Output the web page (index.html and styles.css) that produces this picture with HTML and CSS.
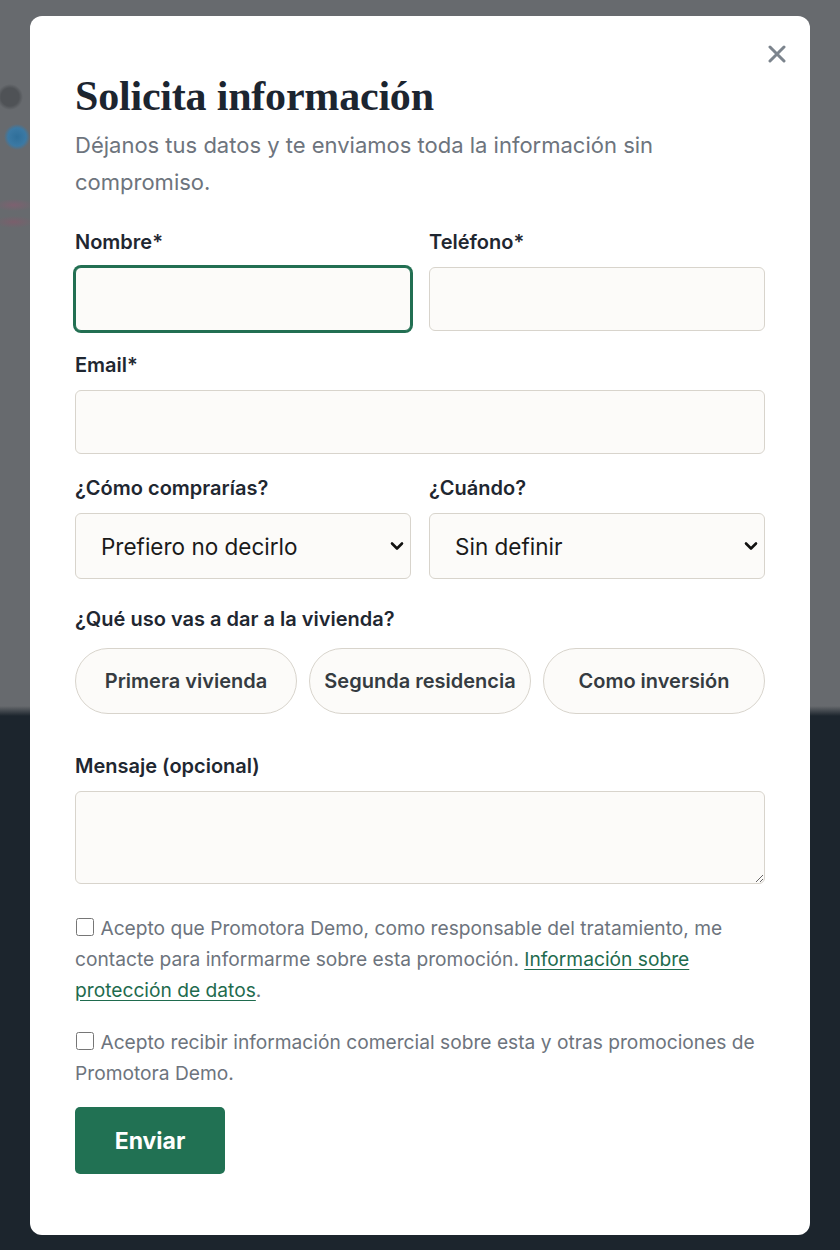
FILE: index.html
```html
<!DOCTYPE html>
<html lang="es">
<head>
<meta charset="utf-8">
<title>Solicita información</title>
<link rel="stylesheet" href="styles.css">
</head>
<body>
<div class="backdrop">
  <div class="modal">
    <div class="modal-top">
      <button class="close" type="button" aria-label="Cerrar">
        <svg width="18" height="18" viewBox="0 0 18 18"><path d="M2 2 L16 16 M16 2 L2 16" stroke="#7c848d" stroke-width="3" stroke-linecap="round"/></svg>
      </button>
    </div>
    <h1 class="title">Solicita información</h1>
    <p class="subtitle">Déjanos tus datos y te enviamos toda la información sin compromiso.</p>

    <form class="form">
      <div class="row two">
        <div class="field">
          <label class="label">Nombre*</label>
          <input class="input focused" type="text">
        </div>
        <div class="field">
          <label class="label">Teléfono*</label>
          <input class="input" type="tel">
        </div>
      </div>
      <div class="field">
        <label class="label">Email*</label>
        <input class="input" type="email">
      </div>
      <div class="row two selects">
        <div class="field">
          <label class="label">¿Cómo comprarías?</label>
          <select class="select"><option>Prefiero no decirlo</option></select>
        </div>
        <div class="field">
          <label class="label">¿Cuándo?</label>
          <select class="select"><option>Sin definir</option></select>
        </div>
      </div>
      <div class="field uso">
        <label class="label">¿Qué uso vas a dar a la vivienda?</label>
        <div class="pills">
          <button type="button" class="pill">Primera vivienda</button>
          <button type="button" class="pill">Segunda residencia</button>
          <button type="button" class="pill">Como inversión</button>
        </div>
      </div>
      <div class="field mensaje">
        <label class="label">Mensaje (opcional)</label>
        <textarea class="textarea"></textarea>
      </div>
      <p class="check first"><input type="checkbox" class="cb"> Acepto que Promotora Demo, como responsable del tratamiento, me contacte para informarme sobre esta promoción. <a href="#" class="link">Información sobre protección de datos</a>.</p>
      <p class="check second"><input type="checkbox" class="cb"> Acepto recibir información comercial sobre esta y otras promociones de Promotora Demo.</p>
      <button type="button" class="submit">Enviar</button>
    </form>
  </div>
</div>
</body>
</html>
```
FILE: styles.css
```css
* { box-sizing: border-box; }
html, body { margin: 0; padding: 0; }
body {
  font-family: Inter, "Noto Sans", "Liberation Sans", sans-serif;
  background-color: #676a6e;
  background-image:
    radial-gradient(circle at 10px 97px, #4f5256 0, #4f5256 9px, transparent 13px),
    radial-gradient(circle at 17px 137px, #2f6f9a 0, #3b79a4 9px, transparent 13px),
    radial-gradient(ellipse 20px 6px at 14px 205px, #7d6170 0, transparent 100%),
    radial-gradient(ellipse 20px 6px at 14px 222px, #7a5f6c 0, transparent 100%),
    linear-gradient(to bottom, #676a6e 0, #676a6e 706px, #1c252d 716px, #1c252d 1250px);
  min-height: 1250px;
}
.backdrop {
  padding: 16px 30px 16px 30px;
}
.modal {
  width: 780px;
  background: #ffffff;
  border-radius: 12px;
  padding: 0 45px 61px 45px;
}
.modal-top {
  display: flex;
  justify-content: flex-end;
  height: 56px;
  padding-top: 28px;
  margin-right: -22px;
}
.close {
  border: 0;
  background: none;
  padding: 0;
  width: 20px;
  height: 20px;
  display: flex;
  align-items: center;
  justify-content: center;
  cursor: pointer;
}
.title {
  margin: 0;
  font-family: "Liberation Serif", "DejaVu Serif", serif;
  font-weight: 700;
  font-size: 42px;
  line-height: 48px;
  color: #1c2530;
  letter-spacing: -0.2px;
}
.subtitle {
  margin: 7px 0 0 0;
  font-size: 22px;
  line-height: 37px;
  color: #6d747d;
  max-width: 640px;
}
.form {
  margin-top: 27px;
  display: flex;
  flex-direction: column;
}
.row.two {
  display: grid;
  grid-template-columns: minmax(0, 1fr) minmax(0, 1fr);
  column-gap: 18px;
}
.field {
  display: flex;
  flex-direction: column;
  min-width: 0;
  margin-bottom: 20px;
}
.label {
  font-size: 20px;
  line-height: 28px;
  font-weight: 600;
  color: #1f2731;
  margin-bottom: 11px;
}
.input {
  width: 100%;
  min-width: 0;
  height: 64px;
  border: 1px solid #d8d4cc;
  border-radius: 6px;
  background: #fcfbf9;
  font-family: inherit;
  font-size: 20px;
  padding: 0 16px;
  outline: none;
}
.input.focused {
  border-color: #226f52;
  box-shadow: 0 0 0 2px #226f52;
}
.select {
  -webkit-appearance: none;
  appearance: none;
  width: 100%;
  min-width: 0;
  height: 66px;
  border: 1px solid #d8d4cc;
  border-radius: 6px;
  background-color: #fcfbf9;
  background-image: url("data:image/svg+xml;utf8,<svg xmlns='http://www.w3.org/2000/svg' width='14' height='10' viewBox='0 0 14 10'><path d='M2 2.5 L7 7.5 L12 2.5' fill='none' stroke='%23111' stroke-width='2.6' stroke-linecap='round' stroke-linejoin='round'/></svg>");
  background-repeat: no-repeat;
  background-position: right 6px center;
  background-size: 14px 10px;
  font-family: inherit;
  font-size: 22.5px;
  color: #1a1a1a;
  padding: 0 24px 0 25px;
}
.selects .field { margin-bottom: 26px; }
.uso .label { margin-bottom: 15px; }
.uso { margin-bottom: 38px; }
.pills {
  display: grid;
  grid-template-columns: repeat(3, minmax(0, 1fr));
  gap: 12px;
}
.pill {
  height: 66px;
  border: 1px solid #d8d4cc;
  border-radius: 999px;
  background: #fcfbf9;
  font-family: inherit;
  font-size: 20px;
  font-weight: 600;
  color: #353b41;
  padding: 0 4px;
  cursor: pointer;
}
.mensaje { margin-bottom: 29px; }
.textarea {
  width: 100%;
  height: 93px;
  border: 1px solid #d8d4cc;
  border-radius: 6px;
  background: #fcfbf9;
  font-family: inherit;
  font-size: 20px;
  padding: 12px 16px;
  resize: vertical;
}
.check {
  margin: 0;
  font-size: 19.2px;
  line-height: 31px;
  color: #6d747d;
}
.check.first { margin-bottom: 21px; }
.check.second { margin-bottom: 18px; }
.cb {
  width: 18px;
  height: 18px;
  margin: 0 1px 0 1px;
  vertical-align: -1px;
}
.link {
  color: #1f6b4e;
  text-decoration: underline;
  text-underline-offset: 3px;
}
.submit {
  align-self: flex-start;
  width: 150px;
  height: 67px;
  border: 0;
  border-radius: 5px;
  background: #217153;
  color: #ffffff;
  font-family: inherit;
  font-size: 23px;
  font-weight: 700;
  cursor: pointer;
}
```
